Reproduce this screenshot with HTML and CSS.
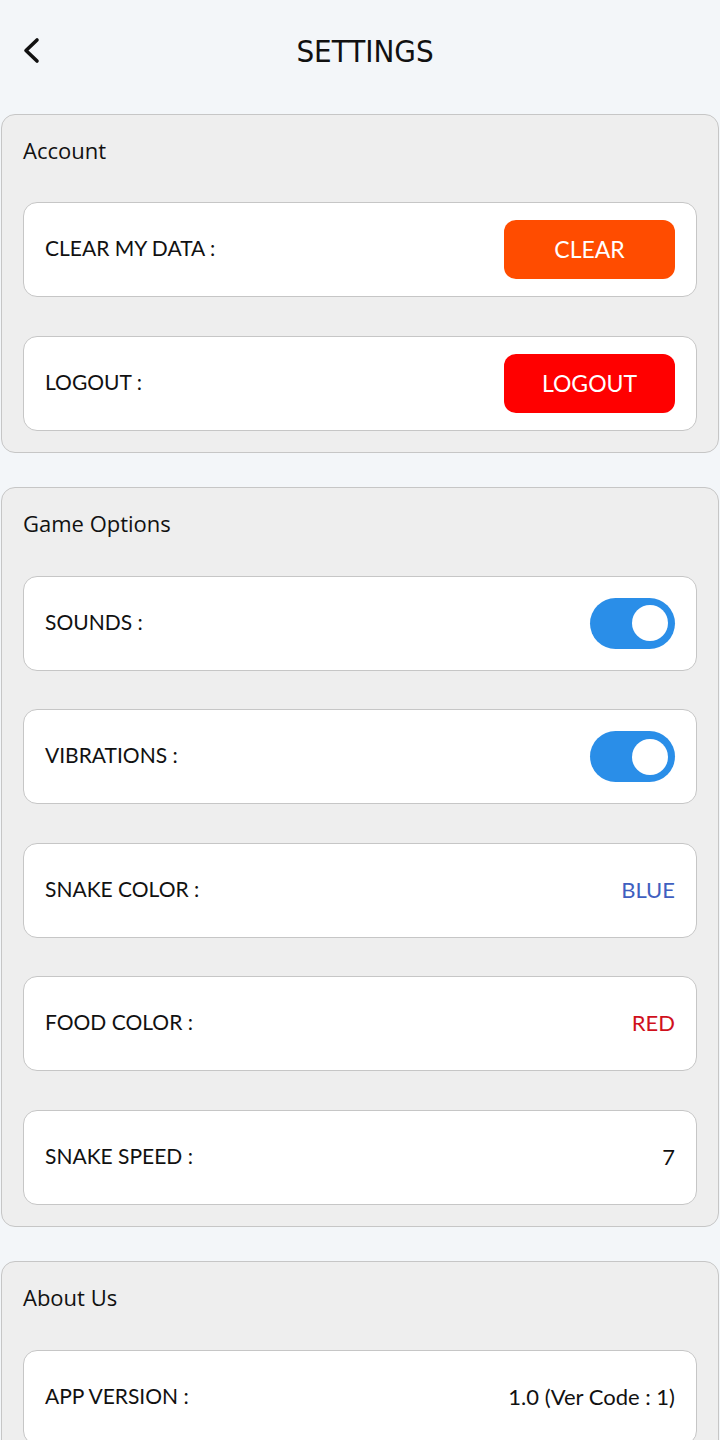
FILE: index.html
```html
<!DOCTYPE html>
<html lang="en">
<head>
    <meta charset="UTF-8">
    <meta name="viewport" content="width=device-width, initial-scale=1.0">
    <title>Settings</title>
    <link rel="stylesheet" href="styles.css">
</head>
<body>
    <div class="header">
        <button class="back" aria-label="Back">
            <svg width="20" height="28" viewBox="0 0 20 28">
                <path d="M15 3 L4 13.5 L15 24" fill="none" stroke="#111" stroke-width="3.6" stroke-linecap="round" stroke-linejoin="round"/>
            </svg>
        </button>
        <h1>SETTINGS</h1>
    </div>

    <div class="section">
        <h2>Account</h2>
        <div class="row">
            <span class="label">CLEAR MY DATA :</span>
            <button class="action clear">CLEAR</button>
        </div>
        <div class="row">
            <span class="label">LOGOUT :</span>
            <button class="action logout">LOGOUT</button>
        </div>
    </div>

    <div class="section">
        <h2>Game Options</h2>
        <div class="row">
            <span class="label">SOUNDS :</span>
            <span class="toggle on"><span class="knob"></span></span>
        </div>
        <div class="row">
            <span class="label">VIBRATIONS :</span>
            <span class="toggle on"><span class="knob"></span></span>
        </div>
        <div class="row">
            <span class="label">SNAKE COLOR :</span>
            <span class="value blue">BLUE</span>
        </div>
        <div class="row">
            <span class="label">FOOD COLOR :</span>
            <span class="value red">RED</span>
        </div>
        <div class="row">
            <span class="label">SNAKE SPEED :</span>
            <span class="value">7</span>
        </div>
    </div>

    <div class="section">
        <h2>About Us</h2>
        <div class="row">
            <span class="label">APP VERSION :</span>
            <span class="value">1.0 (Ver Code : 1)</span>
        </div>
    </div>
</body>
</html>
```

FILE: styles.css
```css
body {
    margin: 0;
    background: #f3f6f9;
    font-family: Lato, "Noto Sans", sans-serif;
    color: #111;
    overflow: hidden;
}

.header {
    position: relative;
    height: 100px;
    display: flex;
    align-items: center;
    justify-content: center;
}

.header h1 {
    margin: 2px 0 0 10px;
    font-family: "Liberation Sans Narrow", "DejaVu Sans", sans-serif;
    font-stretch: condensed;
    font-weight: normal;
    font-size: 31px;
}

.back {
    position: absolute;
    left: 22px;
    top: 37px;
    padding: 0;
    border: none;
    background: none;
    line-height: 0;
}

.section {
    margin: 14px 1px 34px;
    padding: 21px 21px 21px;
    background: #eeeeee;
    border: 1px solid #c6c6c6;
    border-radius: 14px;
}

.section h2 {
    margin: 0 0 38px;
    font-family: "Open Sans", sans-serif;
    font-weight: normal;
    font-size: 22px;
    line-height: 28px;
}

.section + .section h2 {
    margin-bottom: 39px;
}

.row {
    height: 93px;
    padding: 0 21px;
    margin-top: 38.5px;
    background: #fff;
    border: 1px solid #c6c6c6;
    border-radius: 14px;
    display: flex;
    align-items: center;
    justify-content: space-between;
}

.section h2 + .row {
    margin-top: 0;
}

.label {
    font-size: 21px;
    padding-bottom: 4px;
}

.action {
    width: 171px;
    height: 59px;
    border: none;
    border-radius: 12px;
    color: #fff;
    font-family: Lato, sans-serif;
    font-size: 23px;
    padding-bottom: 2px;
}

.action.clear {
    background: #ff4c00;
}

.action.logout {
    background: #ff0000;
}

.toggle {
    width: 85px;
    height: 51px;
    border-radius: 26px;
    background: #2a8ee8;
    display: flex;
    align-items: center;
    justify-content: flex-end;
    padding: 0 7px;
    box-sizing: border-box;
}

.knob {
    width: 36px;
    height: 36px;
    border-radius: 50%;
    background: #fff;
}

.value {
    font-size: 22px;
    padding-bottom: 2px;
}

.value.blue {
    color: #3f5fc0;
}

.value.red {
    color: #d0101c;
}
```
